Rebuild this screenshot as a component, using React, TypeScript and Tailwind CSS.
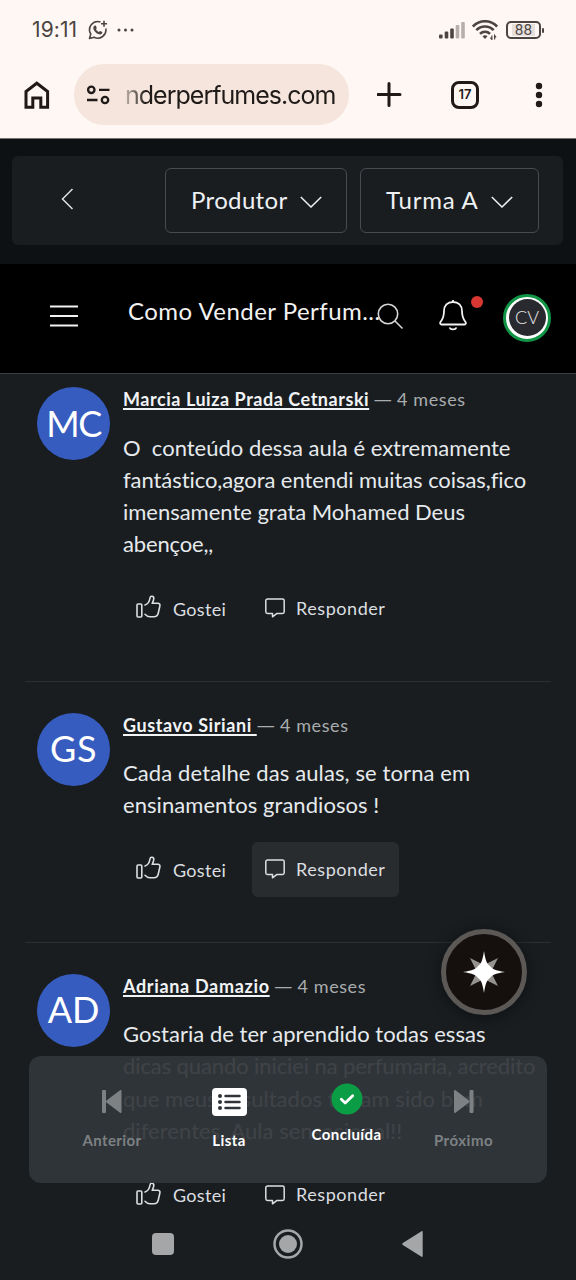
import type { ReactNode } from "react";

type Line = { text: string; spacing: string };

type Comment = {
  initials: string;
  initialsSpacing: string;
  name: string;
  nameSpacing: string;
  lines: Line[];
  highlighted?: boolean;
};

const comments: Comment[] = [
  {
    initials: "MC",
    initialsSpacing: "tracking-[-1.5px]",
    name: "Marcia Luiza Prada Cetnarski",
    nameSpacing: "tracking-[0.54px]",
    lines: [
      { text: "O  conteúdo dessa aula é extremamente", spacing: "tracking-normal" },
      { text: "fantástico,agora entendi muitas coisas,fico", spacing: "tracking-[-0.07px]" },
      { text: "imensamente grata Mohamed Deus", spacing: "tracking-[-0.02px]" },
      { text: "abençoe,,", spacing: "tracking-[-0.15px]" },
    ],
  },
  {
    initials: "GS",
    initialsSpacing: "tracking-[0.5px]",
    name: "Gustavo Siriani ",
    nameSpacing: "tracking-[0.58px]",
    lines: [
      { text: "Cada detalhe das aulas, se torna em", spacing: "tracking-[0.11px]" },
      { text: "ensinamentos grandiosos !", spacing: "tracking-[0.06px]" },
    ],
    highlighted: true,
  },
  {
    initials: "AD",
    initialsSpacing: "tracking-normal",
    name: "Adriana Damazio",
    nameSpacing: "tracking-[0.67px]",
    lines: [
      { text: "Gostaria de ter aprendido todas essas", spacing: "tracking-[0.03px]" },
      { text: "dicas quando iniciei na perfumaria, acredito", spacing: "tracking-[-0.1px]" },
      { text: "que meus resultados teriam sido bem", spacing: "tracking-[0.04px]" },
      { text: "diferentes. Aula sensacional!!", spacing: "tracking-[0.04px]" },
    ],
  },
];

const StatusBar = () => (
  <div className="flex h-[60px] items-center pl-8 pr-[32px] text-[#4a4542]">
    <span className="font-['Inter'] text-[21px] tracking-[0.1px]">19:11</span>
    <svg className="ml-[11px]" width="20" height="20" viewBox="0 0 20 20" fill="none" stroke="currentColor" strokeWidth="1.6">
      <path d="M12.5 2A8.2 8.2 0 0 0 2.8 14L1.5 18.5 6 17.2A8.2 8.2 0 0 0 17.8 8.5" strokeLinejoin="round" />
      <path d="M16 .8v6M13 3.8h6" />
      <path d="M6.2 5.7 7.7 5.5 8.8 8 8 9.2c.6 1.3 1.5 2.1 2.8 2.7l1.2-1 2.4 1.2c0 1.5-1 2.3-2.3 2.3-3.2-.2-6.6-3.4-6.8-6.5 0-1 .3-1.7.9-2.2z" fill="currentColor" stroke="none" />
    </svg>
    <svg className="ml-[9px]" width="17" height="4" fill="currentColor">
      <circle cx="2" cy="2" r="1.5" />
      <circle cx="8.5" cy="2" r="1.5" />
      <circle cx="15" cy="2" r="1.5" />
    </svg>
    <svg className="ml-auto" width="28" height="18" viewBox="0 0 28 18" fill="currentColor">
      <rect x="0" y="13.5" width="3.6" height="4" rx="1" />
      <rect x="5.7" y="10.5" width="3.6" height="7" rx="1" />
      <rect x="11.2" y="7.5" width="3.6" height="10" rx="1" />
      <g opacity=".4">
        <rect x="16.7" y="4" width="3.6" height="13.5" rx="1" />
        <rect x="22.2" y="1" width="3.6" height="16.5" rx="1" />
      </g>
    </svg>
    <svg className="ml-[5px] mr-[2px]" width="26" height="20" viewBox="0 0 26 20" fill="none" stroke="currentColor" strokeWidth="2.6">
      <path d="M.9 6.5C7.5-.5 18.5-.5 25.1 6.5M4.3 10.2c4.8-5 12.6-5 17.4 0M8 13.8c2.7-2.8 7.3-2.8 10 0" />
      <path d="M10.5 16.2c1.3-1.3 3.7-1.3 5 0L13 19z" fill="currentColor" stroke="none" />
      <path d="M19.9 15.5v4l-1.5-1.8M22.6 19.5v-4l1.5 1.8" strokeWidth="1.2" />
    </svg>
    <div className="ml-[6px] flex h-[18px] w-[35px] items-center justify-center rounded-[5px] border-2 border-current font-['Inter'] text-[14px]">
      <span className="bg-[#e6dfdc] px-[3px] leading-[12px]">88</span>
    </div>
    <span className="ml-[1px] h-[5px] w-[2px] rounded-sm bg-current" />
  </div>
);

const BrowserBar = () => (
  <div className="flex h-[79px] items-start border-b border-[#77716f] pl-6 pt-1 text-[#1f1a18]">
    <svg className="mt-[17px]" width="26" height="28" viewBox="0 0 26 28" fill="none" stroke="currentColor" strokeWidth="3">
      <path d="M2 26.3V10.5L12.8 2.2l10.8 8.3v15.8h-6.8v-9.2H8.8v9.2z" />
    </svg>
    <div className="ml-[24px] flex h-[61px] w-[275px] items-center rounded-full bg-[#f5e5dc] pl-[13px]">
      <svg width="23" height="20" viewBox="0 0 23 20" fill="none" stroke="currentColor" strokeWidth="2.3">
        <circle cx="4.3" cy="4.8" r="3.2" />
        <path d="M12 4.8h10.5M0 15h10.5" />
        <circle cx="18" cy="15" r="3.2" />
      </svg>
      <span className="ml-[15px] whitespace-nowrap bg-linear-to-r from-[#1f1a18]/25 to-[#1f1a18] to-10% bg-clip-text font-['Inter'] text-[25px] leading-9 tracking-[-0.98px] text-transparent">
        nderperfumes.com
      </span>
    </div>
    <svg className="ml-[28px] mt-[18px]" width="25" height="25" viewBox="0 0 25 25" stroke="currentColor" strokeWidth="3" strokeLinecap="round">
      <path d="M12 1.500v22M1 12.500h22" />
    </svg>
    <div className="ml-[49px] mt-[17px] flex h-7 w-7 items-center justify-center rounded-[8px] border-[3px] border-current font-['Inter'] text-[13px] font-semibold">
      17
    </div>
    <svg className="ml-[56px] mt-[18px]" width="8" height="26" fill="currentColor">
      <circle cx="4" cy="4" r="3.2" />
      <circle cx="4" cy="13" r="3.2" />
      <circle cx="4" cy="22" r="3.2" />
    </svg>
  </div>
);

const Select = ({ label, className }: { label: string; className: string }) => (
  <button className={`flex h-[65px] items-center rounded-[6px] border border-[#484c50] pb-[2px] pl-[25px] text-[24px] text-[#eef1f3] ${className}`}>
    <span className="whitespace-nowrap">{label}</span>
    <svg className="ml-[12px] mt-[4px] shrink-0" width="22" height="12" viewBox="0 0 22 12" fill="none" stroke="currentColor" strokeWidth="1.5">
      <path d="M.8 1 11 11 21.2 1" />
    </svg>
  </button>
);

const PreviewBar = () => (
  <div className="h-[125px] bg-[#0e1113] px-3 pt-[17px]">
    <div className="flex h-[89px] w-[551px] items-center rounded-[6px] bg-[#191d20] pl-[49px]">
      <svg className="-mt-[3px]" width="13" height="22" viewBox="0 0 13 22" fill="none" stroke="#dfe2e4" strokeWidth="1.5">
        <path d="M11.5 1 1.5 11l10 10" />
      </svg>
      <Select label="Produtor" className="ml-[91px] w-[182px] tracking-[0.35px]" />
      <Select label="Turma A" className="ml-[13px] w-[179px] tracking-[0.8px]" />
    </div>
  </div>
);

const CourseHeader = () => (
  <header className="flex h-[110px] items-center border-b border-[#3b3e41] bg-black pl-[50px] text-[#f2f2f2]">
    <svg className="-mt-[6px] shrink-0" width="28" height="22" stroke="currentColor" strokeWidth="1.8">
      <path d="M0 1.5h28M0 11h28M0 20.5h28" />
    </svg>
    <h1 className="-mt-[16px] ml-[50px] w-[249px] whitespace-nowrap text-[24px] tracking-[0.47px]">Como Vender Perfum...</h1>
    <svg className="-mt-[4px] shrink-0" width="27" height="27" viewBox="0 0 27 27" fill="none" stroke="#d5d5d5" strokeWidth="1.6">
      <circle cx="11" cy="11" r="9.7" />
      <path d="m18 18 7.5 7.5" />
    </svg>
    <svg className="-mt-[7px] ml-[35px] shrink-0" width="28" height="32" viewBox="0 0 28 32" fill="none" stroke="currentColor" strokeWidth="1.8" strokeLinejoin="round">
      <path d="M14 1v2M14 3C8.5 3 5 6.5 5 12c0 6-1 8-3.5 11-.8 1.2-.2 2.5 1 2.5h23c1.2 0 1.8-1.3 1-2.5C24 20 23 18 23 12c0-5.5-3.5-9-9-9z" />
      <path d="M10.5 28.5c1 2.6 6 2.6 7 0" />
    </svg>
    <span className="-mt-[34px] ml-1 h-3 w-3 shrink-0 rounded-full bg-[#d93832]" />
    <div className="-mt-[2px] ml-5 flex h-12 w-12 shrink-0 items-center justify-center rounded-full border-[3px] border-[#129447] bg-white">
      <div className="flex h-[37px] w-[37px] items-center justify-center rounded-full bg-[#292a2f] text-[18px] font-light text-[#e8e8e8]">CV</div>
    </div>
  </header>
);

const ThumbIcon = () => (
  <svg className="-mt-[2px]" width="25" height="24" viewBox="0 0 25 24" fill="none" stroke="currentColor" strokeWidth="1.6" strokeLinejoin="round" strokeLinecap="round">
    <rect x="1" y="9" width="4.8" height="13" rx="1" />
    <path d="M9 10c3-1 4.5-3.5 5-7 .3-2.5 4-2.2 3.8.5-.1 1.8-1 3.5-1.6 4.8h5.6c1.6 0 2.4 1.1 2.1 2.5l-1.7 7.5c-.6 2.5-1.8 3.5-4.2 3.5h-4.2c-2.2 0-3.5-1.1-4.8-2.5" />
  </svg>
);

const ReplyIcon = () => (
  <svg width="20" height="20" viewBox="0 0 20 20" fill="none" stroke="currentColor" strokeWidth="1.5" strokeLinejoin="round">
    <path d="M2.5 1h15A1.7 1.7 0 0 1 19.2 2.7v11A1.7 1.7 0 0 1 17.5 15.4H12L7.5 18.8V15.4h-5A1.7 1.7 0 0 1 .8 13.7v-11A1.7 1.7 0 0 1 2.5 1z" />
  </svg>
);

const CommentItem = ({ comment }: { comment: Comment }) => (
  <article className="ml-[25px] w-[526px] border-b border-[#2b2f32] pb-[45px] pl-3 pt-[31px] first:pt-[13px] last:border-b-0">
    <div className="flex">
      <div className={`flex h-[73px] w-[73px] shrink-0 items-center justify-center rounded-full bg-[#365cc0] pb-[2px] text-[36px] text-white ${comment.initialsSpacing}`}>
        {comment.initials}
      </div>
      <div className="ml-[13px]">
        <p className="-mt-px h-[26px] whitespace-pre text-[18px] leading-[26px] text-[#a9acae]">
          <span className={`font-bold text-[#f1f3f5] underline decoration-[1.5px] underline-offset-[2px] ${comment.nameSpacing}`}>{comment.name}</span>
          {comment.name.endsWith(" ") ? "" : " "}
          <span className="font-['Open_Sans']">—</span>
          <span className="tracking-[0.6px]"> 4 meses</span>
        </p>
        <div className="mt-[19.5px] text-[22px] leading-[32.25px] text-[#e6eaed]">
          {comment.lines.map((line) => (
            <p key={line.text} className={`whitespace-pre ${line.spacing}`}>
              {line.text}
            </p>
          ))}
        </div>
        <div className="mt-5 flex h-[55px] items-center text-[18px] text-[#dcdfe1]">
          <div className="flex w-[129px] items-center gap-3 pl-[13px]">
            <ThumbIcon />
            <span className="pt-[2px] tracking-[0.3px]">Gostei</span>
          </div>
          <div className={`flex h-full w-[147px] items-center gap-[11px] rounded-[6px] pl-[13px] ${comment.highlighted ? "bg-[#292c2f]" : ""}`}>
            <ReplyIcon />
            <span className="tracking-[0.55px]">Responder</span>
          </div>
        </div>
      </div>
    </div>
  </article>
);

const LessonButton = ({ label, className, children }: { label: string; className: string; children: ReactNode }) => (
  <div className={`flex flex-col items-center text-[15px] font-bold leading-5 ${className}`}>
    {children}
    <span className="whitespace-nowrap">{label}</span>
  </div>
);

const LessonBar = () => (
  <div className="absolute left-[29px] top-[1056px] flex h-[127px] w-[518px] items-start rounded-xl bg-[#32363a]/93 pl-[25px]">
    <LessonButton label="Anterior" className="w-[116px] gap-[17px] pt-[34px] tracking-[0.4px] text-[#7d8184]">
      <svg width="20" height="23" viewBox="0 0 20 23" fill="currentColor">
        <rect x="0" y="0" width="4" height="23" rx="1" />
        <path d="M18 .3c1-.6 1.5 0 1.5.8v20.8c0 .8-.5 1.4-1.5.8L4.5 12.5c-.7-.5-.7-1.5 0-2z" />
      </svg>
    </LessonButton>
    <LessonButton label="Lista" className="w-[118px] gap-[14px] pt-[32px] tracking-[0.4px] text-white">
      <svg width="35" height="28" viewBox="0 0 35 28">
        <rect width="35" height="28" rx="4" fill="white" />
        <g stroke="#303438" strokeWidth="2.5" strokeLinecap="round">
          <path d="M13.5 8h14M13.5 14h14M13.5 20h14" />
        </g>
        <g fill="#303438">
          <circle cx="8" cy="8" r="2" />
          <circle cx="8" cy="14" r="2" />
          <circle cx="8" cy="20" r="2" />
        </g>
      </svg>
    </LessonButton>
    <LessonButton label="Concluída" className="w-[117px] gap-[9px] pt-[27px] tracking-[0.4px] text-white">
      <svg width="32" height="32" viewBox="0 0 32 32" fill="none">
        <circle cx="16" cy="16" r="15.5" fill="#0b9c46" />
        <path d="m10.3 16.3 3.9 3.7 7.5-7.2" stroke="white" strokeWidth="2.8" strokeLinecap="round" strokeLinejoin="round" />
      </svg>
    </LessonButton>
    <LessonButton label="Próximo" className="w-[117px] gap-[17px] pt-[34px] tracking-[0.5px] text-[#7d8184]">
      <svg width="20" height="23" viewBox="0 0 20 23" fill="currentColor">
        <rect x="15.5" y="0" width="4" height="23" rx="1" />
        <path d="M1.5.3C.5-.3 0 .3 0 1.1v20.8c0 .8.5 1.4 1.5.8L15 12.5c.7-.5.7-1.5 0-2z" />
      </svg>
    </LessonButton>
  </div>
);

const AssistantButton = () => (
  <button className="absolute left-[441px] top-[929px] flex h-[86px] w-[86px] items-center justify-center rounded-full border-[5px] border-[#5b5856] bg-[#15100e] shadow-[0_2px_16px_rgba(0,0,0,0.45)]">
    <svg width="42" height="42" viewBox="0 0 42 42">
      <path d="M7 7 18 12.5H24L35 7 29.5 18V24L35 35 24 29.5H18L7 35 12.5 24V18z" fill="#96928f" />
      <path d="M21 0C22.5 10 24 13 27 15 29 18 32 19.5 42 21 32 22.5 29 24 27 27 24 29 22.5 32 21 42 19.5 32 18 29 15 27 13 24 10 22.5 0 21 10 19.5 13 18 15 15 18 13 19.5 10 21 0z" fill="white" />
    </svg>
  </button>
);

const SystemNav = () => (
  <div className="absolute bottom-0 left-0 flex h-[72px] w-full items-center pl-[152px] text-[#a4a6a8]">
    <span className="h-[22px] w-[22px] rounded-[4px] bg-current" />
    <svg className="ml-[99px]" width="30" height="30">
      <circle cx="15" cy="15" r="13.5" fill="none" stroke="currentColor" strokeWidth="2.5" />
      <circle cx="15" cy="15" r="9" fill="currentColor" />
    </svg>
    <svg className="ml-[99px]" width="21" height="26" fill="currentColor">
      <path d="M19.5.3c.8-.5 1.2 0 1.2.6v24.2c0 .6-.4 1.1-1.2.6L.8 13.9c-.7-.5-.7-1.3 0-1.8z" />
    </svg>
  </div>
);

const App = () => {
  return (
    <div className="relative flex h-[1280px] w-[576px] flex-col overflow-hidden bg-[#191d20] font-['Lato',sans-serif]">
      <div className="shrink-0 bg-[#fef7f3]">
        <StatusBar />
        <BrowserBar />
      </div>
      <div className="shrink-0">
        <PreviewBar />
        <CourseHeader />
      </div>
      <main className="min-h-0 flex-1 overflow-hidden">
        {comments.map((comment) => (
          <CommentItem key={comment.initials} comment={comment} />
        ))}
      </main>

      {/* Floating controls */}
      <LessonBar />
      <AssistantButton />
      <SystemNav />
    </div>
  );
};

export default App;
